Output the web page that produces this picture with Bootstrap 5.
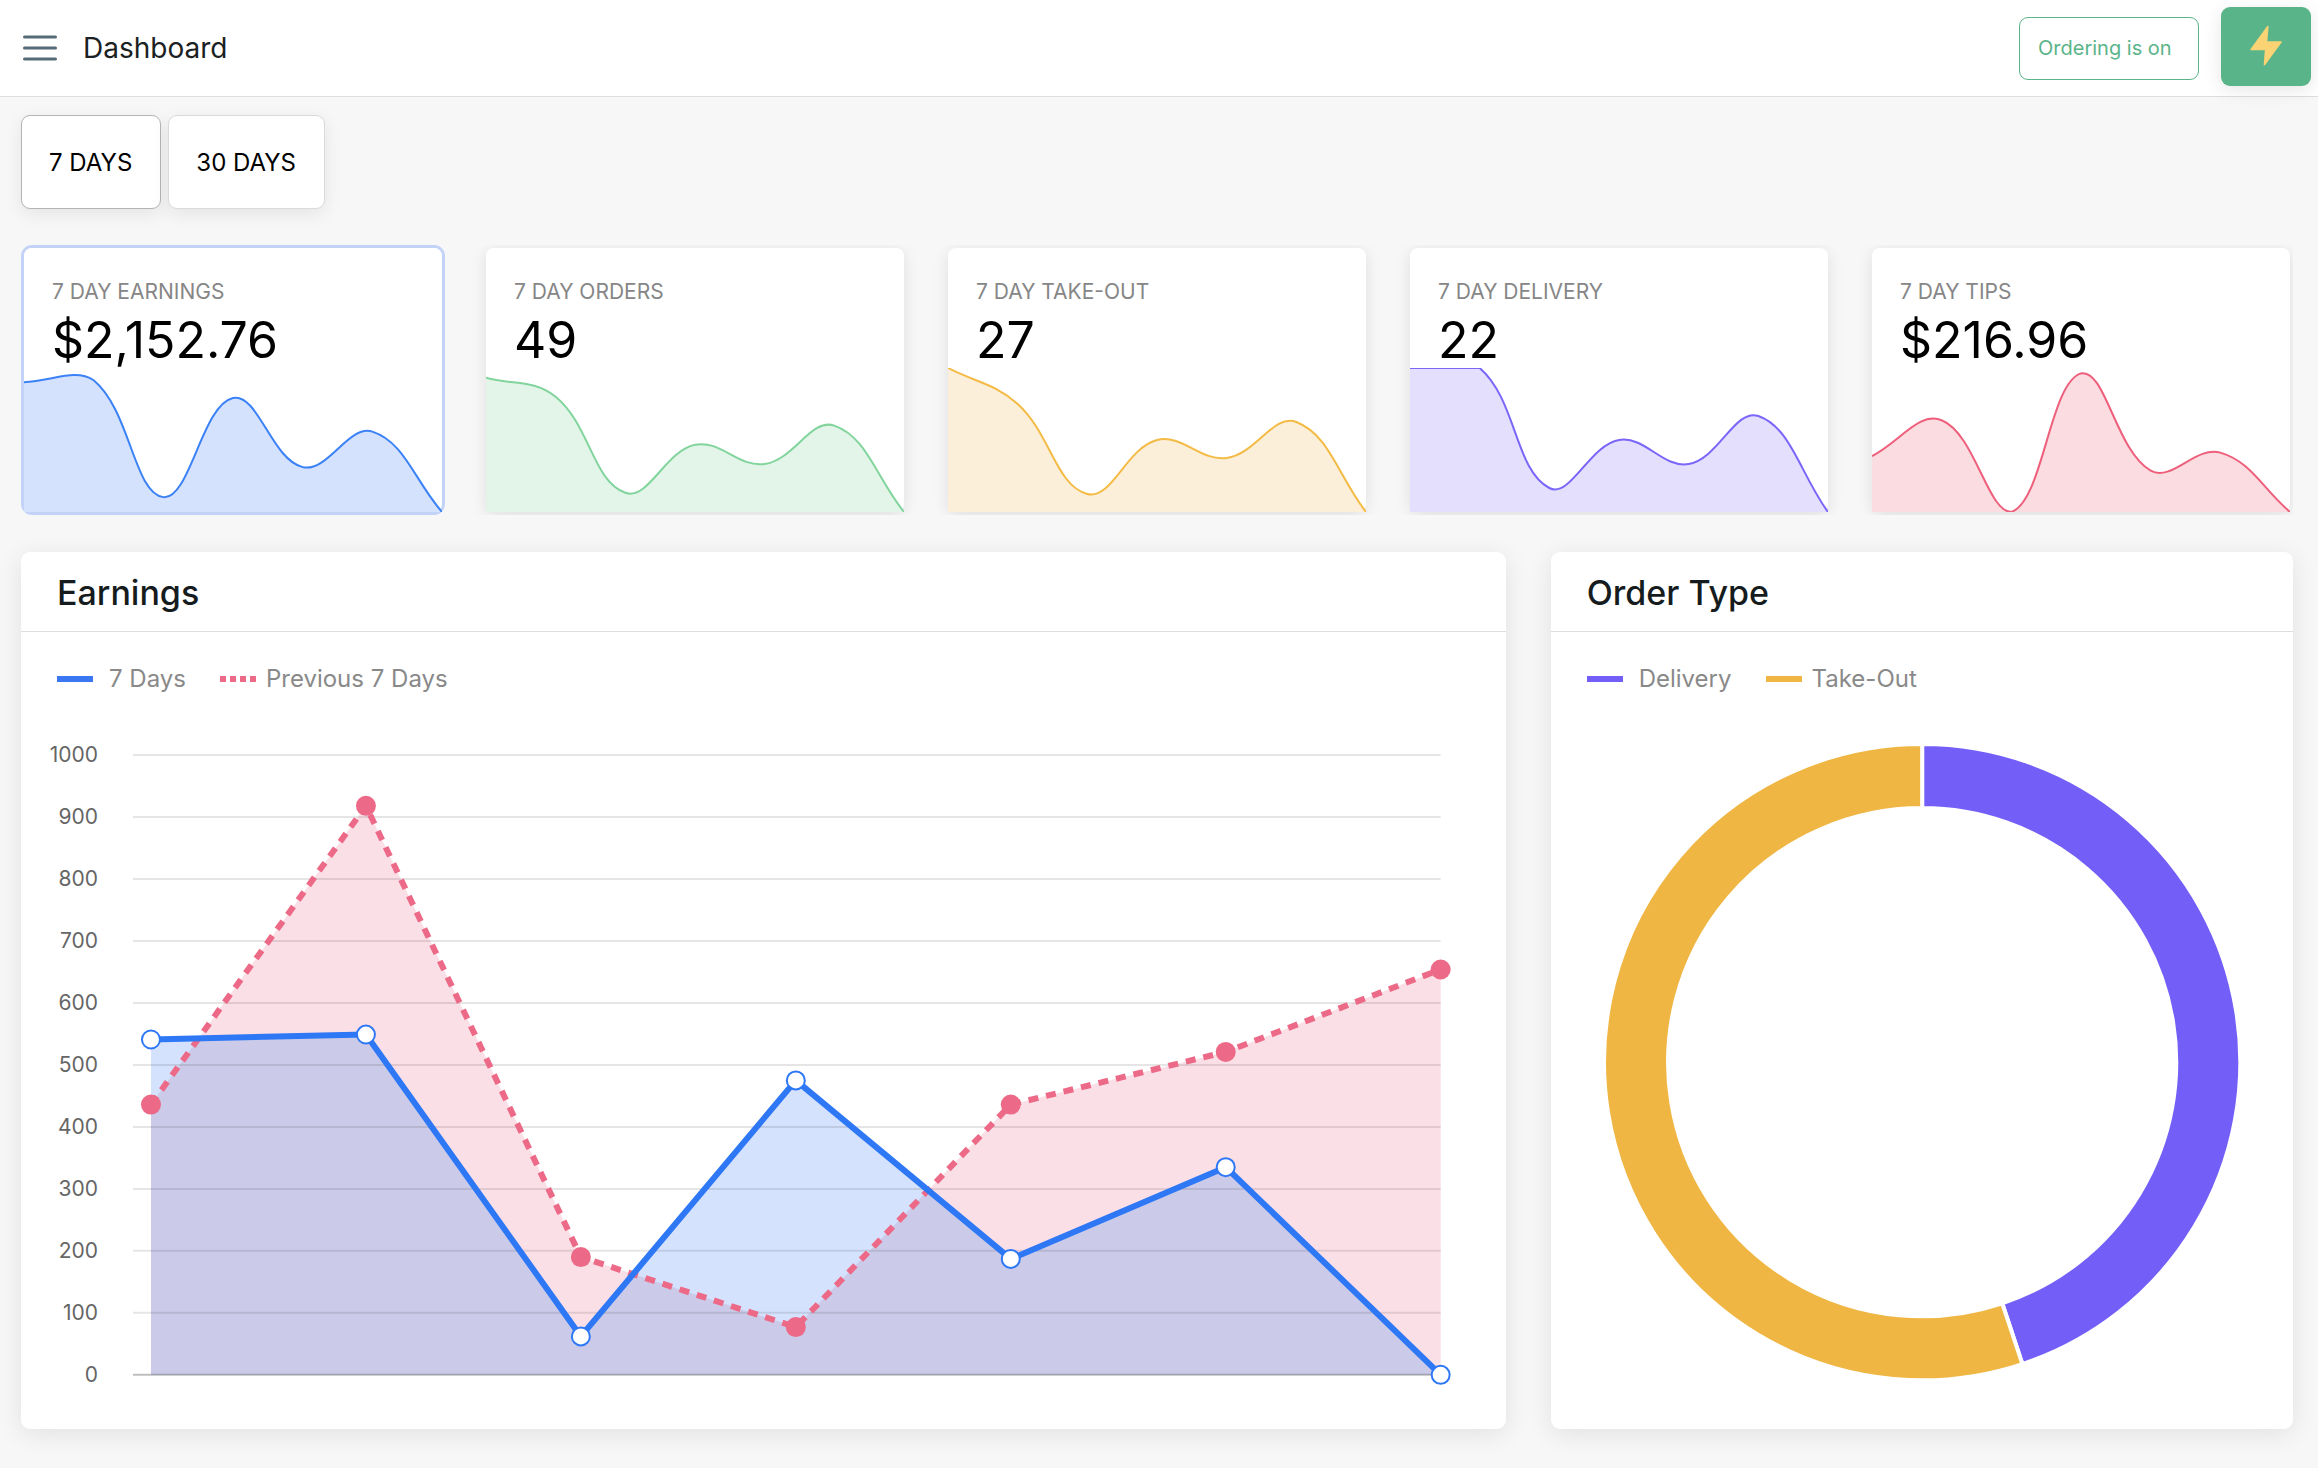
<!DOCTYPE html>
<html lang="en">
<head>
<meta charset="utf-8">
<meta name="viewport" content="width=device-width, initial-scale=1">
<title>Dashboard</title>
<link href="https://cdn.jsdelivr.net/npm/bootstrap@5.3.0/dist/css/bootstrap.min.css" rel="stylesheet">
<style>
  body { background: #f7f7f7; font-family: Inter, "Liberation Sans", sans-serif; color: #000; }
  .topbar { background: #fff; border-bottom: 1px solid #dedede; height: 97px; padding: 0 7px 0 23px; }
  .page-title { font-size: 28px; line-height: 36px; color: #1b2123; font-weight: 400; margin: 0 0 0 26px; }
  .menu-btn { border: 0; background: none; padding: 0; line-height: 0; }
  .btn-ordering { width: 180px; height: 63px; border: 1px solid #5ab489; border-radius: 9px; color: #5ab489; font-size: 20px; padding: 0 26px 0 18px; text-align: left; }
  .btn-bolt { width: 90px; height: 79px; background: #5ab489; border-radius: 9px; border: 0; padding: 0; margin-left: 22px; box-shadow: 0 4px 18px rgba(0,0,0,.1); }
  .board { padding: 18px 25px 39px 21px; }
  .btn-range { height: 94px; padding: 2px 28px 0 27px; background: #fff; border: 1px solid #dadada; border-radius: 9px; font-size: 24px; color: #000; box-shadow: 0 5px 18px rgba(0,0,0,.08); }
  .btn-range.active { background: #fff; color: #000; border-color: #b4b4b4; }
  .ranges { gap: 7px; }
  .stats { display: grid; grid-template-columns: repeat(5, minmax(0, 1fr)); gap: 38px; margin: 36px 0 37px; overflow: hidden; }
  .stat { height: 270px; border: 3px solid transparent; border-radius: 11px; padding: 0; background: none; text-align: left; }
  .stat-face { height: 100%; background: #fff; border-radius: 8px; box-shadow: 0 3px 16px rgba(0,0,0,.1); padding-top: 28px; }
  .stat.selected { border-color: #c2d3f7; }
  .stat.selected .stat-face { box-shadow: none; }
  .stat-label { font-size: 21px; line-height: 32px; color: #868686; padding-left: 28px; }
  .stat-value { font-size: 50px; line-height: 56px; padding: 4px 0 0 28px; }
  .spark { height: 144px; width: 100%; display: block; }
  .panels { display: grid; grid-template-columns: minmax(0, 2fr) minmax(0, 1fr); gap: 45px; }
  .panel { border: 0; border-radius: 9px; box-shadow: 0 5px 26px rgba(0,0,0,.09); background: #fff; overflow: visible; }
  .panel-head { height: 80px; border-bottom: 1px solid #dedede; padding: 2px 36px 0; }
  .panel-head h2 { font-size: 34px; line-height: 44px; font-weight: 500; color: #161c1e; margin: 0; }
  .legend-row { padding: 32px 36px 0; gap: 34px; font-size: 24px; line-height: 30px; color: #898989; }
  .legend-key { width: 36px; height: 6px; margin-right: 10px; }
  .legend-key.wide { margin-right: 16px; }
  .key-blue { background: #3b77f3; }
  .key-dash { background: repeating-linear-gradient(90deg, #ec6a87 0 6px, transparent 6px 10px); }
  .key-violet { background: #735ff7; }
  .key-amber { background: #efb643; }
  .plot { display: block; width: 100%; height: auto; }
  .plot text { font-size: 21px; fill: #666; text-anchor: end; dominant-baseline: central; }
</style>
<script src="https://cdn.jsdelivr.net/npm/bootstrap@5.3.0/dist/js/bootstrap.bundle.min.js"></script>
</head>
<body>
<header class="topbar d-flex align-items-center">
  <button class="menu-btn" type="button" aria-label="Menu">
    <svg width="34" height="26" viewBox="0 0 34 26" fill="none" stroke="#566b78" stroke-width="3" stroke-linecap="round"><path d="M1.5 2h31M1.5 13h31M1.5 24h31"/></svg>
  </button>
  <h1 class="page-title">Dashboard</h1>
  <button class="btn btn-ordering ms-auto text-nowrap" type="button">Ordering is on</button>
  <button class="btn-bolt mb-1" type="button" aria-label="Quick actions">
    <svg width="32" height="42" viewBox="0 0 32 42"><path d="M17 1.300Q18.600 0 18.600 1.800L17.400 16.200H31Q32.500 16.200 31.600 17.600L15.400 39.800Q13.500 41.600 13.700 39.400L14.800 25.200H1.200Q-.3 25.200.7 23.700Z" fill="#f9d374"/></svg>
  </button>
</header>

<main class="board">
  <div class="d-flex ranges" role="group" aria-label="Range">
    <button class="btn btn-range active" type="button">7 DAYS</button>
    <button class="btn btn-range" type="button">30 DAYS</button>
  </div>

  <section class="stats">
    <button class="stat selected" type="button"><span class="stat-face d-flex flex-column"><span class="stat-label">7 DAY EARNINGS</span><span class="stat-value">$2,152.76</span>
      <svg class="spark mt-auto flex-shrink-0" data-values="541,549,62,475,187,335,0" data-max="600" data-line="#3b82f6" data-fill="#d5e2fd"></svg></span></button>
    <button class="stat" type="button"><span class="stat-face d-flex flex-column"><span class="stat-label">7 DAY ORDERS</span><span class="stat-value">49</span>
      <svg class="spark mt-auto flex-shrink-0" data-values="14,12,2,7,5,9,0" data-max="15" data-line="#82d49d" data-fill="#e3f5e9"></svg></span></button>
    <button class="stat" type="button"><span class="stat-face d-flex flex-column"><span class="stat-label">7 DAY TAKE-OUT</span><span class="stat-value">27</span>
      <svg class="spark mt-auto flex-shrink-0" data-values="8,6,1,4,3,5,0" data-max="8" data-line="#f3bb45" data-fill="#fcefd9"></svg></span></button>
    <button class="stat" type="button"><span class="stat-face d-flex flex-column"><span class="stat-label">7 DAY DELIVERY</span><span class="stat-value">22</span>
      <svg class="spark mt-auto flex-shrink-0" data-values="6,6,1,3,2,4,0" data-max="6" data-line="#7a66f8" data-fill="#e3dffd"></svg></span></button>
    <button class="stat" type="button"><span class="stat-face d-flex flex-column"><span class="stat-label">7 DAY TIPS</span><span class="stat-value">$216.96</span>
      <svg class="spark mt-auto flex-shrink-0" data-values="31,51,0,77,23,33,0" data-max="80" data-line="#ee5f7c" data-fill="#fadce1"></svg></span></button>
  </section>

  <section class="panels">
    <article class="card panel">
      <div class="panel-head d-flex align-items-center"><h2>Earnings</h2></div>
      <div class="legend-row d-flex">
        <span class="d-flex align-items-center"><span class="legend-key wide key-blue"></span>7 Days</span>
        <span class="d-flex align-items-center"><span class="legend-key key-dash"></span>Previous 7 Days</span>
      </div>
      <svg class="plot" id="earnings" viewBox="0 0 1485 735" role="img" aria-label="Earnings by day"></svg>
    </article>
    <article class="card panel">
      <div class="panel-head d-flex align-items-center"><h2>Order Type</h2></div>
      <div class="legend-row d-flex">
        <span class="d-flex align-items-center"><span class="legend-key wide key-violet"></span>Delivery</span>
        <span class="d-flex align-items-center"><span class="legend-key key-amber"></span>Take-Out</span>
      </div>
      <svg class="plot" id="types" viewBox="0 0 742 735" role="img" aria-label="22 delivery, 27 take-out"></svg>
    </article>
  </section>
</main>

<script>
  // Small trend curves: smooth spline with control points kept inside the chart area
  const W = 418, H = 144, TENSION = 0.4;
  const clamp = y => Math.max(0, Math.min(H, y));
  document.querySelectorAll('.spark').forEach(svg => {
    const { values, max, line, fill } = svg.dataset;
    const pts = values.split(',').map((v, i, all) => ({ x: i * W / (all.length - 1), y: H - v / max * H }));
    const ctl = pts.map((p, i) => {
      const a = pts[i - 1] || p, b = pts[i + 1] || p;
      const d1 = Math.hypot(p.x - a.x, p.y - a.y), d2 = Math.hypot(b.x - p.x, b.y - p.y);
      const f1 = TENSION * d1 / (d1 + d2), f2 = TENSION * d2 / (d1 + d2);
      return {
        px: p.x - f1 * (b.x - a.x), py: clamp(p.y - f1 * (b.y - a.y)),
        nx: p.x + f2 * (b.x - a.x), ny: clamp(p.y + f2 * (b.y - a.y))
      };
    });
    let d = `M${pts[0].x} ${pts[0].y}`;
    for (let i = 1; i < pts.length; i++)
      d += `C${ctl[i - 1].nx} ${ctl[i - 1].ny} ${ctl[i].px} ${ctl[i].py} ${pts[i].x} ${pts[i].y}`;
    svg.setAttribute('viewBox', `0 0 ${W} ${H}`);
    svg.setAttribute('preserveAspectRatio', 'none');
    svg.innerHTML = `<path d="${d}V${H}H0Z" fill="${fill}"/><path d="${d}" fill="none" stroke="${line}" stroke-width="2"/>`;
  });

  // Earnings chart: areas first, then the grid, lines and points over them
  const base = 681, x0 = 130, step = 215;
  const now = [541, 549, 62, 475, 187, 335, 0];
  const before = [436, 918, 190, 77, 436, 521, 654];
  const at = list => list.map((v, i) => [x0 + i * step, base - v * 0.62]);
  const area = p => `M${x0} ${base}L${p.join('L')}V${base}Z`;
  const a = at(now), b = at(before);
  let out = `<clipPath id="shared"><path d="${area(b)}"/></clipPath>`;
  out += `<path d="${area(b)}" fill="#fbdfe6"/><path d="${area(a)}" fill="#d5e2fd"/>`;
  out += `<path d="${area(a)}" fill="#cbcbe9" clip-path="url(#shared)"/>`;
  for (let v = 0; v <= 1000; v += 100) {
    const y = base - v * 0.62;
    out += `<path d="M112 ${y}H1420" stroke="#000" stroke-opacity="${v ? .1 : .25}" stroke-width="2"/><text x="77" y="${y}">${v}</text>`;
  }
  out += `<path d="M${b.join('L')}" fill="none" stroke="#ec6a87" stroke-width="6" stroke-dasharray="10 8"/>`;
  out += b.map(p => `<circle cx="${p[0]}" cy="${p[1]}" r="10" fill="#ec6a87"/>`).join('');
  out += `<path d="M${a.join('L')}" fill="none" stroke="#2e78f6" stroke-width="6" stroke-linejoin="round"/>`;
  out += a.map(p => `<circle cx="${p[0]}" cy="${p[1]}" r="9" fill="#fff" stroke="#2e78f6" stroke-width="2"/>`).join('');
  document.getElementById('earnings').innerHTML = out;

  // Order type ring
  const cx = 371, cy = 368, R = 318, r = 254, ang = 22 / 49 * 2 * Math.PI;
  const px = (rad, t) => `${cx + rad * Math.sin(t)} ${cy - rad * Math.cos(t)}`;
  const ring = (s, e, col) => {
    const big = e - s > Math.PI ? 1 : 0;
    return `<path d="M${px(R, s)}A${R} ${R} 0 ${big} 1 ${px(R, e)}L${px(r, e)}A${r} ${r} 0 ${big} 0 ${px(r, s)}Z" fill="${col}" stroke="#fff" stroke-width="4"/>`;
  };
  document.getElementById('types').innerHTML =
    ring(0, ang, '#735ff7') + ring(ang, 2 * Math.PI, '#efb643');
</script>
</body>
</html>
